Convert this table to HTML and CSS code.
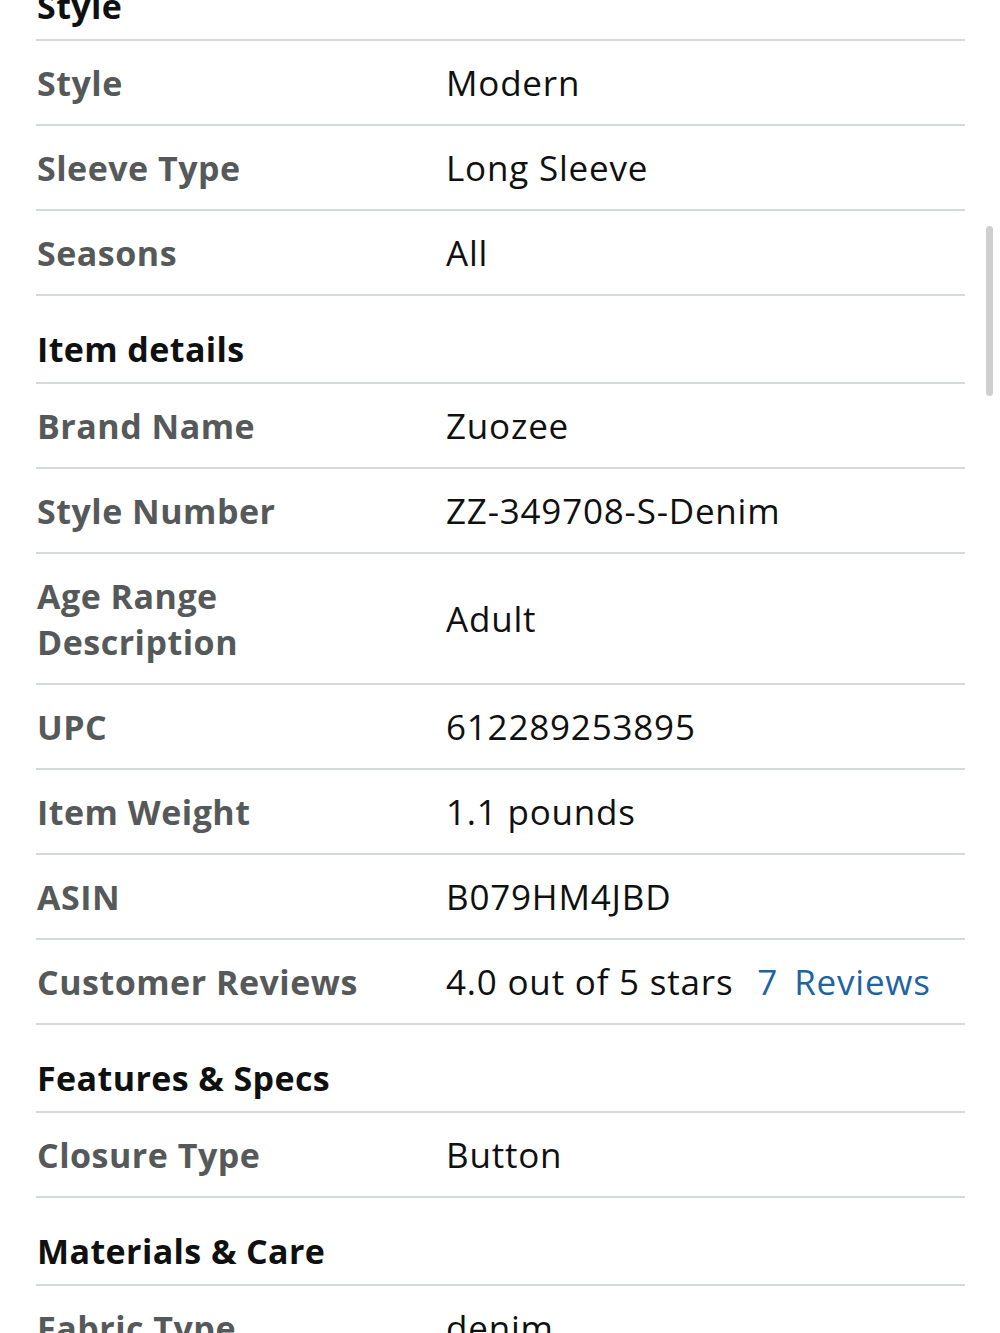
FILE: index.html
```html
<!DOCTYPE html>
<html lang="en">
<head>
    <meta charset="UTF-8">
    <meta name="viewport" content="width=device-width, initial-scale=1.0">
    <title>Product Details</title>
    <link rel="stylesheet" href="styles.css">
</head>
<body>
    <div class="details">
        <div class="section-title">Style</div>
        <div class="row"><div class="label">Style</div><div class="value">Modern</div></div>
        <div class="row"><div class="label">Sleeve Type</div><div class="value">Long Sleeve</div></div>
        <div class="row"><div class="label">Seasons</div><div class="value">All</div></div>

        <div class="section-title">Item details</div>
        <div class="row"><div class="label">Brand Name</div><div class="value">Zuozee</div></div>
        <div class="row"><div class="label">Style Number</div><div class="value">ZZ-349708-S-Denim</div></div>
        <div class="row"><div class="label">Age Range<br>Description</div><div class="value">Adult</div></div>
        <div class="row"><div class="label">UPC</div><div class="value">612289253895</div></div>
        <div class="row"><div class="label">Item Weight</div><div class="value">1.1 pounds</div></div>
        <div class="row"><div class="label">ASIN</div><div class="value">B079HM4JBD</div></div>
        <div class="row">
            <div class="label">Customer Reviews</div>
            <div class="value">4.0 out of 5 stars <a href="#" class="reviews-link">7<span class="reviews-word">Reviews</span></a></div>
        </div>

        <div class="section-title">Features &amp; Specs</div>
        <div class="row"><div class="label">Closure Type</div><div class="value">Button</div></div>

        <div class="section-title">Materials &amp; Care</div>
        <div class="row"><div class="label">Fabric Type</div><div class="value">denim</div></div>
    </div>

    <div class="scrollbar"></div>
</body>
</html>
```

FILE: styles.css
```css
:root {
    --text: #0f1111;
    --label: #565959;
    --divider: #d5d9d9;
    --link: #2162a1;
}

* {
    margin: 0;
    padding: 0;
    box-sizing: border-box;
}

body {
    font-family: 'Open Sans', 'Noto Sans', sans-serif;
    font-size: 34px;
    line-height: 46px;
    color: var(--text);
    background: #fff;
    overflow: hidden;
    height: 1333px;
}

.details {
    margin: -47px 35px 0 36px;
}

.section-title {
    font-weight: 700;
    letter-spacing: 0.4px;
    padding: 30px 1px 10px;
    border-bottom: 2px solid var(--divider);
}

.row {
    display: grid;
    grid-template-columns: 409px 1fr;
    align-items: center;
    padding: 19px 1px 18px;
    border-bottom: 2px solid var(--divider);
}

.label {
    font-weight: 700;
    letter-spacing: 0.5px;
    color: var(--label);
}

.value {
    font-size: 35px;
    letter-spacing: 0.8px;
    color: var(--text);
}

.reviews-link {
    color: var(--link);
    text-decoration: none;
    margin-left: 14px;
}

.reviews-word {
    margin-left: 16px;
}

.scrollbar {
    position: absolute;
    top: 226px;
    left: 986px;
    width: 7px;
    height: 170px;
    border-radius: 4px;
    background: #cfcfcf;
}
```
